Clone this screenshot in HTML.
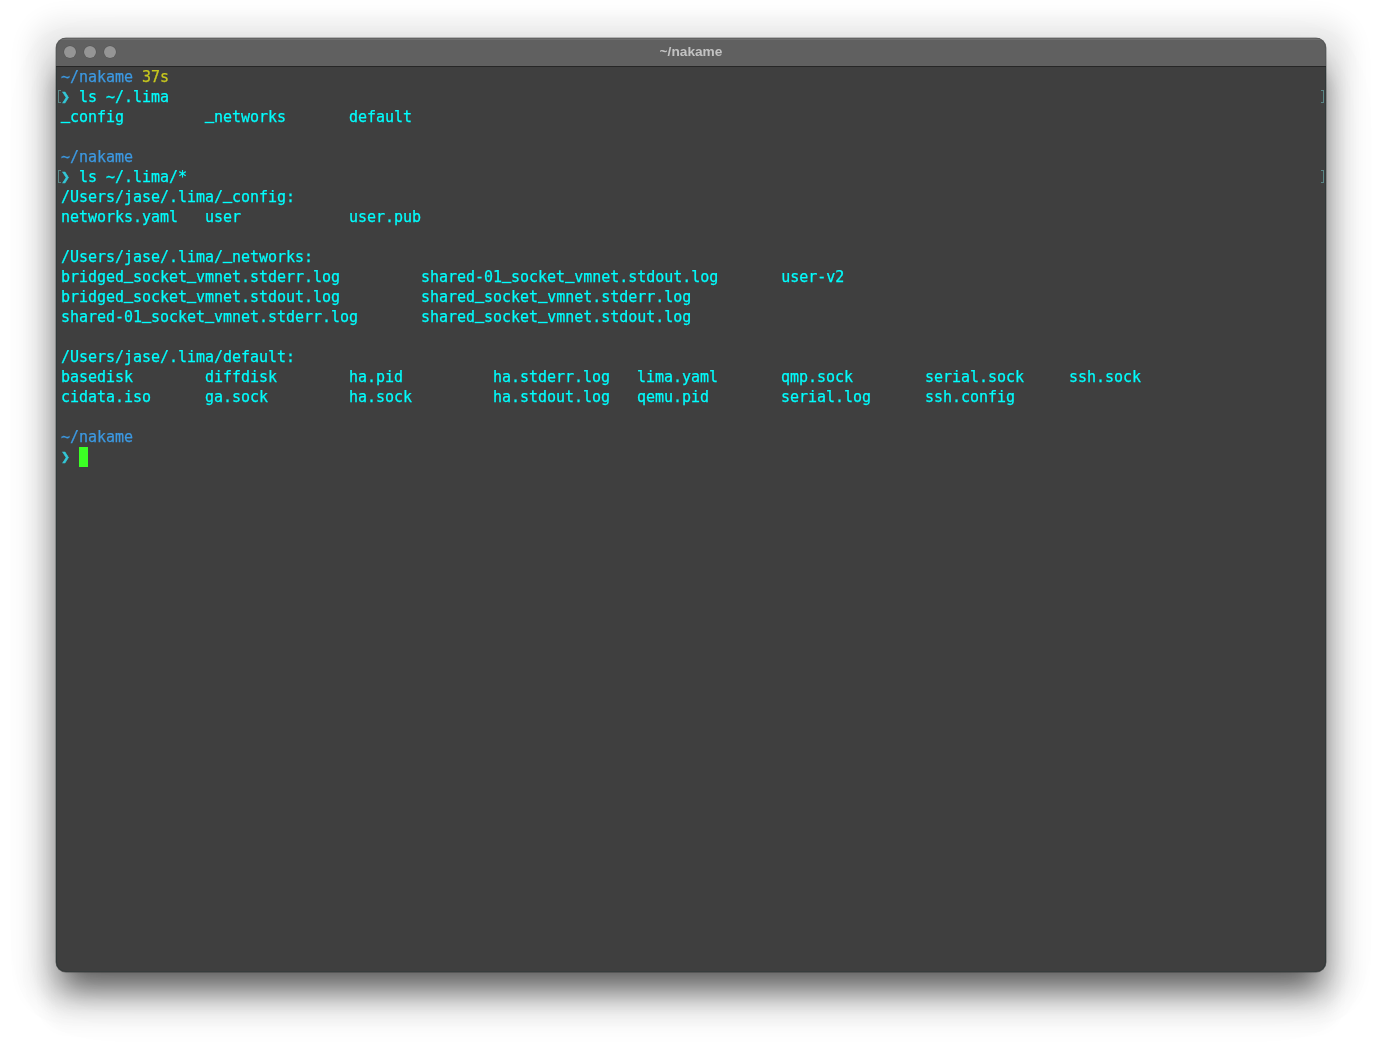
<!DOCTYPE html>
<html lang="en">
<head>
<meta charset="utf-8">
<title>~/nakame</title>
<style>
html,body{margin:0;padding:0;}
body{width:1382px;height:1046px;background:#ffffff;position:relative;overflow:hidden;}
.win{position:absolute;left:56px;top:38px;width:1270px;height:934px;border-radius:10px;background:#3f3f3f;
  box-shadow:0 0 0 0.5px rgba(0,0,0,0.45), 0 21.4px 31.4px -6px rgba(0,0,0,0.6), 0 46px 15px 10px rgba(0,0,0,0.03), 0 7px 24px 25px rgba(0,0,0,0.08), 0 24px 70px 6px rgba(0,0,0,0.03);overflow:hidden;}
.bar{position:absolute;left:0;top:0;right:0;height:28px;background:#606060;border-top:1px solid #626262;box-sizing:border-box;box-shadow:inset 0 1px 0 #6f6f6f;}
.sep{position:absolute;left:0;right:0;top:28px;height:1px;background:#262626;}
.dot{position:absolute;top:7px;width:12px;height:12px;border-radius:50%;background:#959595;box-shadow:0 0 0 0.5px rgba(0,0,0,0.15);}
.title{position:absolute;left:0;right:0;top:0;height:27px;line-height:26px;text-align:center;
  font-family:"Liberation Sans",sans-serif;font-weight:bold;font-size:13.7px;color:#c2c2c2;transform:translateZ(0);will-change:transform;}
.term{position:absolute;left:5px;top:29px;right:0;bottom:0;font-family:"DejaVu Sans Mono", "Liberation Mono", monospace;font-size:15px;letter-spacing:-0.03px;
  transform:translateZ(0);will-change:transform;-webkit-text-stroke:0.25px;}
.ln{position:absolute;left:0;height:20px;line-height:20px;white-space:pre;}
.c{color:#00fdfd;}
.p{color:#3c99e2;}
.u{position:relative;top:-3.5px;-webkit-text-stroke:0.7px;}
.y{color:#c8c81e;}
.a,.a2{color:#33c7d6;-webkit-text-stroke:0.5px;}
.ring{position:absolute;left:0;top:0;right:0;bottom:0;border-radius:10px;box-shadow:inset 1px 0 0 rgba(20,40,40,0.12), inset -1px 0 0 rgba(20,40,40,0.12);pointer-events:none;}
.ring2{position:absolute;left:0;top:29px;right:0;bottom:0;border-radius:0 0 10px 10px;border:1px solid rgba(25,50,50,0.22);border-top:none;box-sizing:border-box;pointer-events:none;}
.cur{background:#3bff24;display:inline-block;width:9px;height:20px;vertical-align:top;}
.bk{position:absolute;width:2px;height:11px;border:1px solid #5a8585;}
.bk.l{border-right:none;left:2px;}
.bk.r{border-left:none;left:1265px;}
</style>
</head>
<body>
<div class="win">
  <div class="bar">
    <div class="dot" style="left:8px"></div>
    <div class="dot" style="left:28px"></div>
    <div class="dot" style="left:48px"></div>
    <div class="title">~/nakame</div>
  </div>
  <div class="sep"></div>
  <div class="bk l" style="top:52px"></div>
  <div class="bk r" style="top:52px"></div>
  <div class="bk l" style="top:132px"></div>
  <div class="bk r" style="top:132px"></div>
  <div class="term">
<div class="ln" style="top:0px"><span class="p">~/nakame</span><span class="t"> </span><span class="y">37s</span></div>
<div class="ln" style="top:20px"><span class="a">❯</span><span class="c"> ls ~/.lima</span></div>
<div class="ln" style="top:40px"><span class="c"><span class="u">_</span>config         <span class="u">_</span>networks       default</span></div>
<div class="ln" style="top:80px"><span class="p">~/nakame</span></div>
<div class="ln" style="top:100px"><span class="a">❯</span><span class="c"> ls ~/.lima/*</span></div>
<div class="ln" style="top:120px"><span class="c">/Users/jase/.lima/<span class="u">_</span>config:</span></div>
<div class="ln" style="top:140px"><span class="c">networks.yaml   user            user.pub</span></div>
<div class="ln" style="top:180px"><span class="c">/Users/jase/.lima/<span class="u">_</span>networks:</span></div>
<div class="ln" style="top:200px"><span class="c">bridged<span class="u">_</span>socket<span class="u">_</span>vmnet.stderr.log         shared-01<span class="u">_</span>socket<span class="u">_</span>vmnet.stdout.log       user-v2</span></div>
<div class="ln" style="top:220px"><span class="c">bridged<span class="u">_</span>socket<span class="u">_</span>vmnet.stdout.log         shared<span class="u">_</span>socket<span class="u">_</span>vmnet.stderr.log</span></div>
<div class="ln" style="top:240px"><span class="c">shared-01<span class="u">_</span>socket<span class="u">_</span>vmnet.stderr.log       shared<span class="u">_</span>socket<span class="u">_</span>vmnet.stdout.log</span></div>
<div class="ln" style="top:280px"><span class="c">/Users/jase/.lima/default:</span></div>
<div class="ln" style="top:300px"><span class="c">basedisk        diffdisk        ha.pid          ha.stderr.log   lima.yaml       qmp.sock        serial.sock     ssh.sock</span></div>
<div class="ln" style="top:320px"><span class="c">cidata.iso      ga.sock         ha.sock         ha.stdout.log   qemu.pid        serial.log      ssh.config</span></div>
<div class="ln" style="top:360px"><span class="p">~/nakame</span></div>
<div class="ln" style="top:380px"><span class="a2">❯</span><span class="t"> </span><span class="cur"> </span></div>

  </div>
  <div class="ring"></div>
  <div class="ring2"></div>
</div>
</body>
</html>
